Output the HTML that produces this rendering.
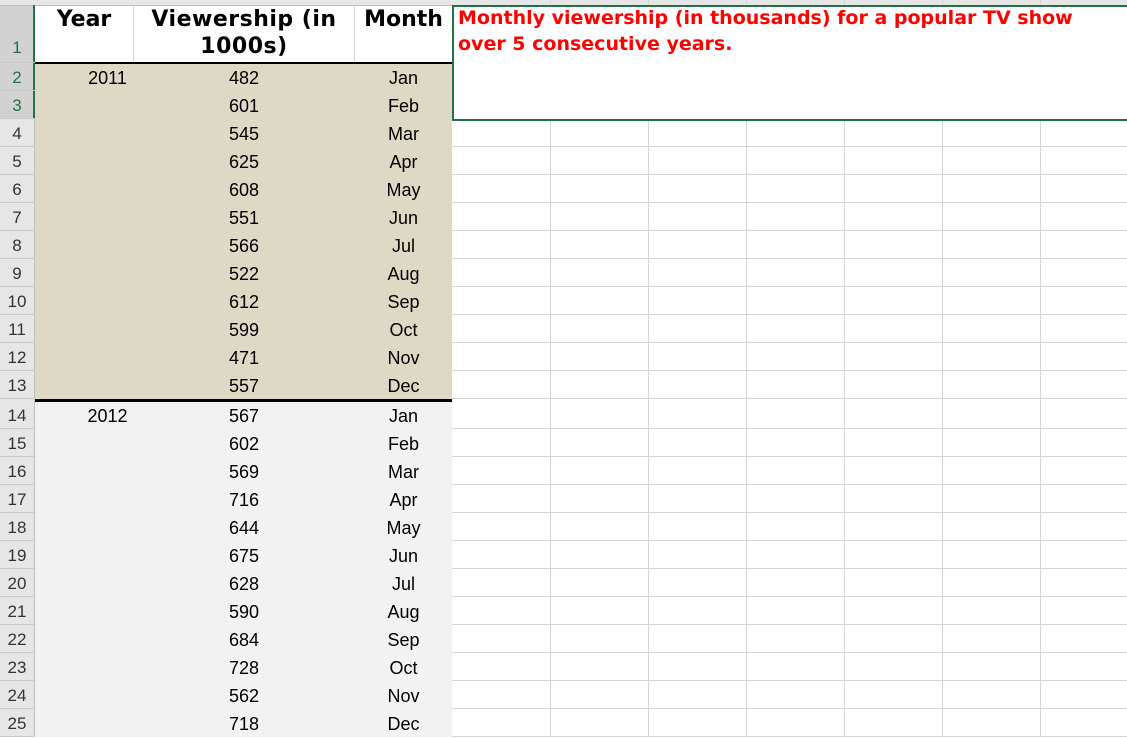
<!DOCTYPE html>
<html><head><meta charset="utf-8"><style>
body{margin:0;width:1127px;height:737px;overflow:hidden;background:#fff;position:relative;font-family:"Liberation Sans",sans-serif}
.a{position:absolute}
.vl{position:absolute;top:0;bottom:0;width:1px;background:#d4d4d4}
.rn{position:absolute;left:0;width:34px;text-align:center;font-size:17px;color:#333;height:28px;line-height:30px}
.c{position:absolute;text-align:center;font-size:18px;color:#000;height:28px;line-height:30px}
</style></head><body>
<div class="a" style="left:0;top:0;width:34px;height:737px;background:#e6e6e6;border-right:1px solid #bfbfbf"></div>
<div class="a" style="left:0;top:0;width:34px;height:119px;background:#d2d2d2"></div>
<div class="a" style="left:0;top:0;width:1127px;height:5px;background:#e6e6e6;border-bottom:1px solid #bfbfbf"></div>
<div class="a" style="left:35px;top:63px;width:417px;height:337px;background:#ddd9c4"></div>
<div class="a" style="left:35px;top:402px;width:417px;height:335px;background:#f2f2f2"></div>
<div class="vl" style="left:133px;top:5px;height:57px"></div>
<div class="vl" style="left:354px;top:5px;height:57px"></div>
<div class="vl" style="left:550px"></div><div class="vl" style="left:648px"></div><div class="vl" style="left:746px"></div><div class="vl" style="left:844px"></div><div class="vl" style="left:942px"></div><div class="vl" style="left:1040px"></div>
<div class="a" style="left:35px;top:62px;width:417px;height:2px;background:#000"></div>
<div class="a" style="left:35px;top:399px;width:417px;height:3px;background:#000"></div>
<div class="a" style="left:33px;top:5px;width:2px;height:114px;background:#217346"></div>
<div class="a" style="left:35px;top:6px;width:98px;text-align:center;font-family:'DejaVu Sans',sans-serif;font-weight:bold;font-size:22px;line-height:27px">Year</div>
<div class="a" style="left:134px;top:6px;width:220px;text-align:center;font-family:'DejaVu Sans',sans-serif;font-weight:bold;font-size:22px;line-height:27px;letter-spacing:0.5px">Viewership (in 1000s)</div>
<div class="a" style="left:355px;top:6px;width:97px;text-align:center;font-family:'DejaVu Sans',sans-serif;font-weight:bold;font-size:22px;line-height:27px">Month</div>
<div class="rn" style="top:33px;color:#217346">1</div>
<div id="rows"></div>
<div class="a" style="left:452px;top:5px;width:675px;height:116px;background:#fff;border:2px solid #217346;border-right:none;box-sizing:border-box;z-index:5"></div>
<div class="a" style="left:458px;top:5px;width:640px;font-family:'DejaVu Sans',sans-serif;font-weight:bold;font-size:19px;line-height:26px;color:#ff0000;z-index:6">Monthly viewership (in thousands) for a popular TV show<br>over 5 consecutive years.</div>
<script>
var d=[482,601,545,625,608,551,566,522,612,599,471,557,567,602,569,716,644,675,628,590,684,728,562,718];
var m=["Jan","Feb","Mar","Apr","May","Jun","Jul","Aug","Sep","Oct","Nov","Dec"];
var h="";
for(var i=0;i<24;i++){
 var y=63+i*28+(i>=12?2:0);
 var col=(i<2)?"#217346":"#333";
 h+='<div class="rn" style="top:'+y+'px;color:'+col+'">'+(i+2)+'</div>';
 h+='<div class="a" style="left:0;top:'+(y+27)+'px;width:35px;height:1px;background:#c8c8c8"></div>';
 h+='<div class="a" style="left:452px;top:'+(y+27)+'px;width:675px;height:1px;background:#d4d4d4"></div>';
 if(i==0)h+='<div class="c" style="left:35px;width:145px;top:'+y+'px">2011</div>';
 if(i==12)h+='<div class="c" style="left:35px;width:145px;top:'+y+'px">2012</div>';
 h+='<div class="c" style="left:134px;width:220px;top:'+y+'px">'+d[i]+'</div>';
 h+='<div class="c" style="left:355px;width:97px;top:'+y+'px">'+m[i%12]+'</div>';
}
h+='<div class="a" style="left:0;top:62px;width:35px;height:1px;background:#c8c8c8"></div>';
document.getElementById("rows").innerHTML=h;
</script>
</body></html>
